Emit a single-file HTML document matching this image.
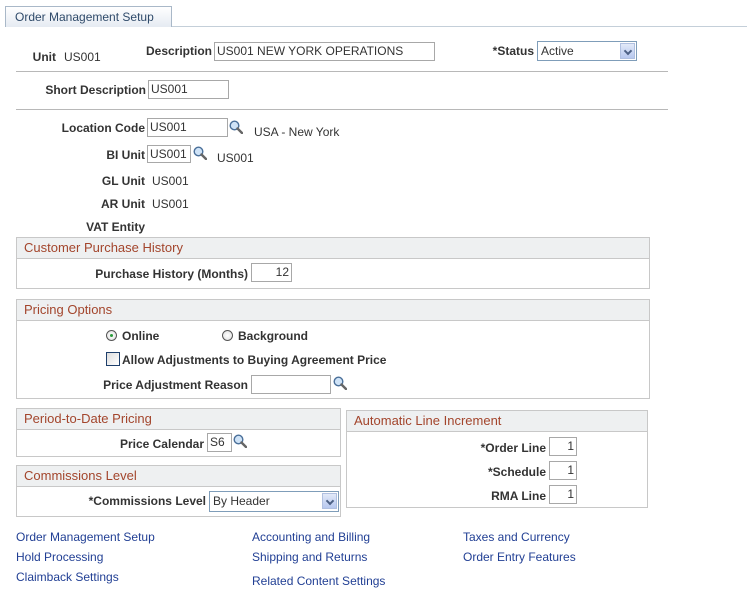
<!DOCTYPE html>
<html><head><meta charset="utf-8"><style>
body{margin:0;width:747px;height:589px;background:#fff;font-family:"Liberation Sans",Arial,sans-serif;font-size:12px;color:#333;position:relative;overflow:hidden}
.a{position:absolute}
.l{position:absolute;font-weight:bold;color:#333;white-space:nowrap;line-height:14px;text-align:right}
.t{position:absolute;color:#333;white-space:nowrap;line-height:14px}
.i{position:absolute;border:1px solid #a8a8a8;background:#fff;box-sizing:border-box;font-size:12px;line-height:17px;padding:0 2px;color:#333;white-space:nowrap;overflow:hidden}
.hr{position:absolute;height:1px;background:#b8b8b8}
.box{position:absolute;border:1px solid #c8c8c8;box-sizing:border-box}
.hd{height:20px;background:#eef0f1;border-bottom:1px solid #c8c8c8;color:#a3452c;font-size:13px;line-height:20px;padding-left:7px}
.lk{position:absolute;color:#213f94;white-space:nowrap;line-height:14px}
.sel{position:absolute;border:1px solid #7f9db9;background:#fff;box-sizing:border-box;line-height:18px;padding-left:3px}
.sel b{position:absolute;right:1px;top:1px;width:15px;height:16px;background:linear-gradient(#e2e9f8,#b7c8ef);border:1px solid #b0c0e0;box-sizing:border-box}
.sel b:after{content:"";position:absolute;left:4px;top:4px;width:4px;height:4px;border-right:2px solid #4d6185;border-bottom:2px solid #4d6185;transform:rotate(45deg)}
.mg{position:absolute;width:14px;height:14px}
.rad{position:absolute;width:11px;height:11px;border:1px solid #555;border-radius:50%;box-sizing:border-box;background:radial-gradient(#fff,#ddd)}
</style></head><body>
<div class="a" style="left:172px;top:26px;width:575px;height:1px;background:#c4cfd9"></div>
<div class="a" style="left:5px;top:6px;width:167px;height:21px;box-sizing:border-box;border:1px solid #a9b8c8;border-bottom:none;background:linear-gradient(#fff,#e5ebf2);color:#2f4a6a;font-size:12px;line-height:20px;padding-left:9px">Order Management Setup</div>

<div class="l" style="right:691px;top:50px">Unit</div><div class="t" style="left:64px;top:50px">US001</div>
<div class="l" style="right:535px;top:44px">Description</div>
<div class="i" style="left:214px;top:42px;width:221px;height:19px">US001 NEW YORK OPERATIONS</div>
<div class="l" style="right:213px;top:44px">*Status</div>
<div class="sel" style="left:537px;top:41px;width:100px;height:20px">Active<b></b></div>
<div class="hr" style="left:16px;top:71px;width:652px"></div>
<div class="l" style="right:601px;top:83px">Short Description</div>
<div class="i" style="left:148px;top:80px;width:81px;height:19px">US001</div>
<div class="hr" style="left:16px;top:109px;width:652px"></div>

<svg width="0" height="0" style="position:absolute"><defs><g id="m"><circle cx="5.5" cy="5.5" r="4.3" fill="#cfe3f7" stroke="#4a6f99" stroke-width="1.4"/><path d="M8.5 8.5 L13 13" stroke="#666" stroke-width="2.4" stroke-linecap="round"/></g></defs></svg>

<div class="l" style="right:602px;top:121px">Location Code</div>
<div class="i" style="left:147px;top:118px;width:81px;height:19px">US001</div>
<svg class="mg" style="left:229px;top:120px"><use href="#m"/></svg>
<div class="t" style="left:254px;top:125px">USA - New York</div>
<div class="l" style="right:602px;top:148px">BI Unit</div>
<div class="i" style="left:147px;top:145px;width:44px;height:18px">US001</div>
<svg class="mg" style="left:193px;top:146px"><use href="#m"/></svg>
<div class="t" style="left:217px;top:151px">US001</div>
<div class="l" style="right:602px;top:174px">GL Unit</div><div class="t" style="left:152px;top:174px">US001</div>
<div class="l" style="right:602px;top:197px">AR Unit</div><div class="t" style="left:152px;top:197px">US001</div>
<div class="l" style="right:602px;top:220px">VAT Entity</div>

<div class="box" style="left:16px;top:237px;width:634px;height:52px"><div class="hd">Customer Purchase History</div></div>
<div class="l" style="right:499px;top:267px">Purchase History (Months)</div>
<div class="i" style="left:251px;top:263px;width:41px;height:19px;text-align:right">12</div>

<div class="box" style="left:16px;top:299px;width:634px;height:100px"><div class="hd">Pricing Options</div></div>
<div class="rad" style="left:106px;top:330px"><div class="a" style="left:3px;top:3px;width:3px;height:3px;background:#2a9a3a;border-radius:50%"></div></div>
<div class="l" style="left:122px;top:329px;text-align:left">Online</div>
<div class="rad" style="left:222px;top:330px"></div>
<div class="l" style="left:238px;top:329px;text-align:left">Background</div>
<div class="a" style="left:106px;top:352px;width:14px;height:14px;border:1px solid #1e3f6b;box-sizing:border-box;background:linear-gradient(135deg,#ddd,#fff)"></div>
<div class="l" style="left:122px;top:353px;text-align:left">Allow Adjustments to Buying Agreement Price</div>
<div class="l" style="right:499px;top:378px">Price Adjustment Reason</div>
<div class="i" style="left:251px;top:375px;width:80px;height:19px"></div>
<svg class="mg" style="left:333px;top:376px"><use href="#m"/></svg>

<div class="box" style="left:16px;top:408px;width:325px;height:49px"><div class="hd">Period-to-Date Pricing</div></div>
<div class="l" style="right:543px;top:437px">Price Calendar</div>
<div class="i" style="left:207px;top:433px;width:25px;height:19px">S6</div>
<svg class="mg" style="left:233px;top:434px"><use href="#m"/></svg>

<div class="box" style="left:16px;top:465px;width:325px;height:52px"><div class="hd">Commissions Level</div></div>
<div class="l" style="right:541px;top:494px">*Commissions Level</div>
<div class="sel" style="left:209px;top:491px;width:130px;height:21px">By Header<b></b></div>

<div class="box" style="left:346px;top:410px;width:302px;height:98px"><div class="hd">Automatic Line Increment</div></div>
<div class="l" style="right:201px;top:441px">*Order Line</div>
<div class="i" style="left:549px;top:437px;width:28px;height:19px;text-align:right">1</div>
<div class="l" style="right:201px;top:465px">*Schedule</div>
<div class="i" style="left:549px;top:461px;width:28px;height:19px;text-align:right">1</div>
<div class="l" style="right:201px;top:489px">RMA Line</div>
<div class="i" style="left:549px;top:485px;width:28px;height:19px;text-align:right">1</div>

<div class="lk" style="left:16px;top:530px">Order Management Setup</div>
<div class="lk" style="left:16px;top:550px">Hold Processing</div>
<div class="lk" style="left:16px;top:570px">Claimback Settings</div>
<div class="lk" style="left:252px;top:530px">Accounting and Billing</div>
<div class="lk" style="left:252px;top:550px">Shipping and Returns</div>
<div class="lk" style="left:252px;top:574px">Related Content Settings</div>
<div class="lk" style="left:463px;top:530px">Taxes and Currency</div>
<div class="lk" style="left:463px;top:550px">Order Entry Features</div>
</body></html>
